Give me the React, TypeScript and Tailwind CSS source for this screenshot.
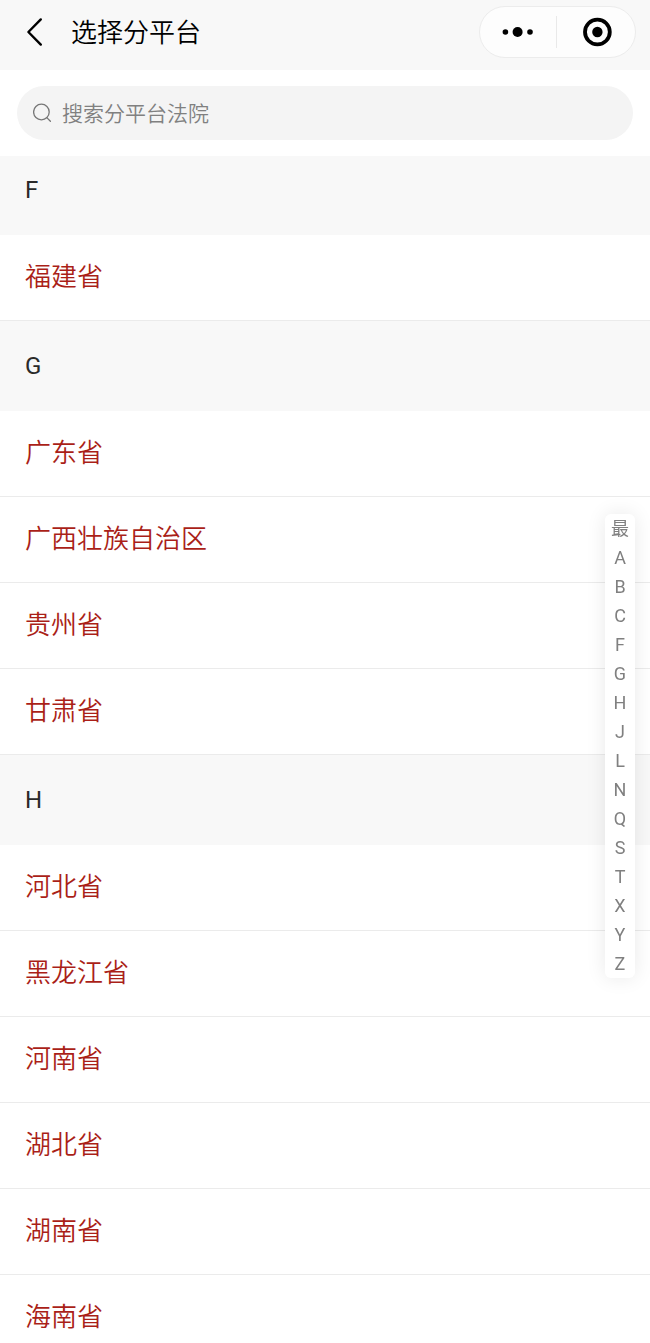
import React, { useState } from 'react';

interface Group {
  letter: string;
  courts: string[];
}

const GROUPS: Group[] = [
  { letter: 'F', courts: ['福建省'] },
  { letter: 'G', courts: ['广东省', '广西壮族自治区', '贵州省', '甘肃省'] },
  { letter: 'H', courts: ['河北省', '黑龙江省', '河南省', '湖北省', '湖南省', '海南省'] },
];

const INDEX = ['最', 'A', 'B', 'C', 'F', 'G', 'H', 'J', 'L', 'N', 'Q', 'S', 'T', 'X', 'Y', 'Z'];

const Header: React.FC = () => (
  <header className="flex h-[70px] shrink-0 items-start justify-between bg-[#f8f8f8] pt-[6px] pr-[14px] pl-5">
    <div className="flex h-[52px] items-center">
      <button type="button" aria-label="返回" className="flex h-10 w-[30px] items-center justify-center">
        <svg width="20" height="30" viewBox="0 0 20 30" fill="none" stroke="#000" strokeWidth="2.4">
          <path d="M15.8 2.4 L3.4 15 L15.8 27.6" strokeLinejoin="round" strokeLinecap="round" />
        </svg>
      </button>
      <h1 className="pt-[2px] pl-[21px] text-[26px] leading-9 font-[350] text-black">选择分平台</h1>
    </div>

    <div className="flex h-[52px] w-[157px] items-center rounded-full border border-[#ececec] bg-[#fdfdfd]">
      <button type="button" aria-label="更多" className="flex h-full flex-1 items-center justify-center">
        <svg width="32" height="12" viewBox="0 0 32 12" fill="#000">
          <circle cx="3.4" cy="6" r="2.8" />
          <circle cx="15.6" cy="6" r="5" />
          <circle cx="28" cy="6" r="2.8" />
        </svg>
      </button>
      <span className="h-8 w-px bg-[#e9e9e9]" />
      <button type="button" aria-label="关闭" className="flex h-full flex-1 items-center justify-center pl-[2px]">
        <svg width="30" height="30" viewBox="0 0 30 30" fill="none">
          <circle cx="15.4" cy="15" r="12.4" stroke="#000" strokeWidth="3.8" />
          <circle cx="15.4" cy="15" r="5.2" fill="#000" />
        </svg>
      </button>
    </div>
  </header>
);

const App: React.FC = () => {
  const [query, setQuery] = useState('');

  const groups = GROUPS.map((g) => ({
    ...g,
    courts: g.courts.filter((c) => c.includes(query.trim())),
  })).filter((g) => g.courts.length > 0);

  return (
    <div className="relative flex h-screen flex-col overflow-hidden bg-white font-[Roboto,'Noto_Sans_CJK_SC',sans-serif]">
      <Header />

      {/* Search */}
      <div className="shrink-0 px-[17px] py-4">
        <label className="flex h-[54px] items-center rounded-full bg-[#f4f4f4] pr-5 pl-4">
          <svg width="20" height="20" viewBox="0 0 20 20" fill="none" stroke="#777" strokeWidth="1.3" className="shrink-0">
            <circle cx="8.4" cy="9" r="7.8" />
            <path d="M13.8 14.6 L17.4 18.2" strokeLinecap="round" />
          </svg>
          <input
            type="text"
            aria-label="搜索分平台法院"
            value={query}
            onChange={(e) => setQuery(e.target.value)}
            placeholder="搜索分平台法院"
            className="ml-[9px] h-full min-w-0 flex-1 bg-transparent pt-[2px] text-[21px] font-[350] text-[#333] outline-none placeholder:text-[#808080]"
          />
        </label>
      </div>

      {/* Province list */}
      <main className="flex min-h-0 flex-1 flex-col gap-[11px] overflow-y-auto bg-[#f8f8f8] [scrollbar-width:none]">
        {groups.map((g) => (
          <section key={g.letter}>
            <h2 className="h-[79px] pt-4 pl-[25px] text-[24px] leading-9 font-normal text-[#2a2a2a]">{g.letter}</h2>
            <ul className="bg-white">
              {g.courts.map((c) => (
                <li key={c} className="border-b border-[#ebebeb]">
                  <a href="#" className="flex h-[85px] items-center px-[25px] text-[26px] font-[350] text-[#aa1f18]">
                    {c}
                  </a>
                </li>
              ))}
            </ul>
          </section>
        ))}
      </main>

      {/* Letter index */}
      <nav className="absolute top-[514px] right-[15px] flex w-[30px] flex-col rounded-md bg-white shadow-[0_0_20px_rgba(0,0,0,0.09)]">
        {INDEX.map((l) => (
          <button key={l} type="button" className="h-[29px] text-center text-[18px] leading-[29px] text-[#808080]">
            {l}
          </button>
        ))}
      </nav>
    </div>
  );
};

export default App;
